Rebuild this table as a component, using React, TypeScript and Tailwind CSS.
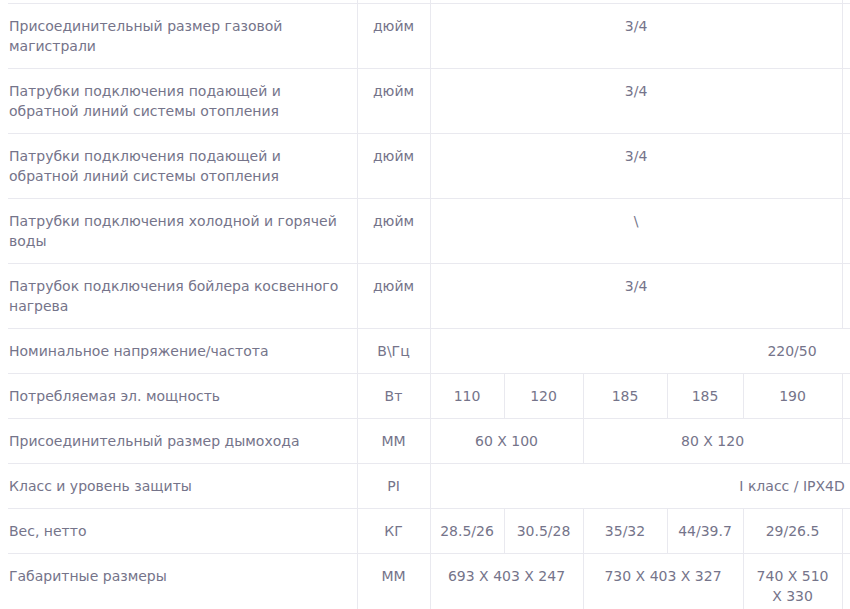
import React from 'react';

type Cell = { text?: React.ReactNode; span?: number };
type Row = { label: React.ReactNode; unit: string; cells: Cell[] };

const rows: Row[] = [
	{
		label: (
			<>
				Присоединительный размер газовой
				<br />
				магистрали
			</>
		),
		unit: 'дюйм',
		cells: [{ text: '3/4', span: 5 }, {}]
	},
	{
		label: (
			<>
				Патрубки подключения подающей и
				<br />
				обратной линий системы отопления
			</>
		),
		unit: 'дюйм',
		cells: [{ text: '3/4', span: 5 }, {}]
	},
	{
		label: (
			<>
				Патрубки подключения подающей и
				<br />
				обратной линий системы отопления
			</>
		),
		unit: 'дюйм',
		cells: [{ text: '3/4', span: 5 }, {}]
	},
	{
		label: (
			<>
				Патрубки подключения холодной и горячей
				<br />
				воды
			</>
		),
		unit: 'дюйм',
		cells: [{ text: '\\', span: 5 }, {}]
	},
	{
		label: (
			<>
				Патрубок подключения бойлера косвенного
				<br />
				нагрева
			</>
		),
		unit: 'дюйм',
		cells: [{ text: '3/4', span: 5 }, {}]
	},
	{ label: 'Номинальное напряжение/частота', unit: 'В\\Гц', cells: [{ text: '220/50', span: 6 }] },
	{
		label: 'Потребляемая эл. мощность',
		unit: 'Вт',
		cells: [{ text: '110' }, { text: '120' }, { text: '185' }, { text: '185' }, { text: '190' }, {}]
	},
	{
		label: 'Присоединительный размер дымохода',
		unit: 'ММ',
		cells: [{ text: '60 X 100', span: 2 }, { text: '80 X 120', span: 3 }, {}]
	},
	{ label: 'Класс и уровень защиты', unit: 'PI', cells: [{ text: 'I класс / IPX4D', span: 6 }] },
	{
		label: 'Вес, нетто',
		unit: 'КГ',
		cells: [
			{ text: '28.5/26' },
			{ text: '30.5/28' },
			{ text: '35/32' },
			{ text: '44/39.7' },
			{ text: '29/26.5' },
			{}
		]
	},
	{
		label: 'Габаритные размеры',
		unit: 'ММ',
		cells: [
			{ text: '693 X 403 X 247', span: 2 },
			{ text: '730 X 403 X 327', span: 2 },
			{ text: '740 X 510 X 330' }
		]
	}
];

const td = 'border border-[#e9e9ef] align-top py-3 px-2 text-center';

export default function App() {
	return (
		<div
			className="w-[850px] h-[609px] overflow-hidden bg-white pl-2 text-[14px] leading-5 text-[#75748a]"
			style={{ fontFamily: '"DejaVu Sans", sans-serif' }}
		>
			<table className="table-fixed border-collapse w-[1146px]">
				<colgroup>
					<col className="w-[349px]" />
					<col className="w-[73px]" />
					<col className="w-[74px]" />
					<col className="w-[79px]" />
					<col className="w-[84px]" />
					<col className="w-[76px]" />
					<col className="w-[99px]" />
					<col className="w-[312px]" />
				</colgroup>
				<tbody>
					<tr>
						<td className="border border-[#e9e9ef] border-l-0 border-t-0 h-[3px] p-0" />
						<td className="border border-[#e9e9ef] border-t-0 h-[3px] p-0" />
						<td colSpan={5} className="border border-[#e9e9ef] border-t-0 h-[3px] p-0" />
						<td className="border border-[#e9e9ef] border-t-0 h-[3px] p-0" />
					</tr>
					{rows.map((row, i) => (
						<tr key={i}>
							<td className="border border-[#e9e9ef] border-l-0 align-top py-3 pl-[1px] pr-2 text-left">
								{row.label}
							</td>
							<td className={td}>{row.unit}</td>
							{row.cells.map((cell, j) => (
								<td key={j} colSpan={cell.span} className={td}>
									{cell.text}
								</td>
							))}
						</tr>
					))}
				</tbody>
			</table>
		</div>
	);
}
